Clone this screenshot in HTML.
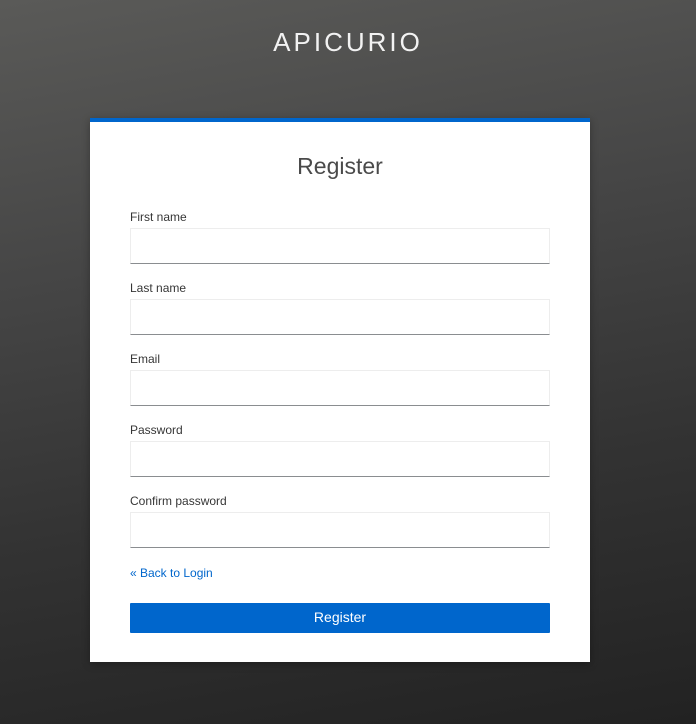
<!DOCTYPE html>
<html><head><style>
*{margin:0;padding:0;box-sizing:border-box}
body{width:696px;height:724px;overflow:hidden;font-family:"Liberation Sans",sans-serif;background:linear-gradient(170deg,#5a5a58 0%,#454545 35%,#333 65%,#222 100%);position:relative}
.logo{position:absolute;top:27px;left:0;width:696px;text-align:center;color:#f2f2f2;font-size:26px;letter-spacing:3px}
.card{position:absolute;left:90px;top:118px;width:500px;height:544px;background:#fff;border-top:4px solid #0066cc;box-shadow:0 2px 8px rgba(0,0,0,.3)}
h1{position:absolute;top:31px;width:100%;text-align:center;font-weight:300;font-size:23px;color:#4a4a4a}
.lbl{position:absolute;left:40px;font-size:12px;color:#363636}
.inp{position:absolute;left:40px;width:420px;height:36px;border:1px solid #ededed;border-bottom:1px solid #8a8d90}
.link{position:absolute;left:40px;top:444px;font-size:12px;color:#0066cc}
.btn{position:absolute;left:40px;top:481px;width:420px;height:30px;background:#0066cc;color:#fff;font-size:14px;text-align:center;line-height:28px;border-radius:1px}
</style></head><body>
<div class="logo">APICURIO</div>
<div class="card">
<h1>Register</h1>
<div class="lbl" style="top:88px">First name</div><div class="inp" style="top:106px"></div>
<div class="lbl" style="top:159px">Last name</div><div class="inp" style="top:177px"></div>
<div class="lbl" style="top:230px">Email</div><div class="inp" style="top:248px"></div>
<div class="lbl" style="top:301px">Password</div><div class="inp" style="top:319px"></div>
<div class="lbl" style="top:372px">Confirm password</div><div class="inp" style="top:390px"></div>
<div class="link">« Back to Login</div>
<div class="btn">Register</div>
</div>
</body></html>
